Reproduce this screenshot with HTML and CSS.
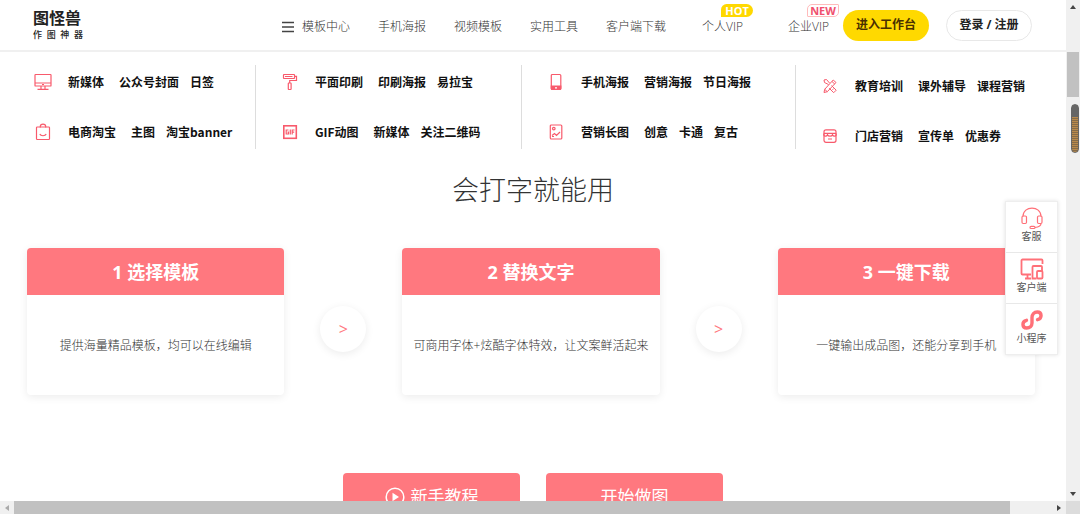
FILE: index.html
```html
<!DOCTYPE html>
<html lang="zh-CN">
<head>
<meta charset="utf-8">
<title>图怪兽作图神器</title>
<link rel="stylesheet" href="styles.css">
</head>
<body>
<div class="window">
  <div class="page">
    <header class="header">
      <a class="logo" href="#"><span class="logo-name">图怪兽</span><span class="logo-sub"><span>作</span><span>图</span><span>神</span><span>器</span></span></a>
      <nav class="nav">
        <a href="#" class="nav-menu"><svg width="12" height="12" viewBox="0 0 12 12" fill="none" stroke="#444" stroke-width="1.5"><path d="M0 1.5h12M0 6h12M0 10.5h12"/></svg>模板中心</a>
        <a href="#">手机海报</a>
        <a href="#">视频模板</a>
        <a href="#">实用工具</a>
        <a href="#">客户端下载</a>
        <a href="#" class="vip">个人VIP<span class="badge badge-hot">HOT</span></a>
        <a href="#" class="vip vip-company">企业VIP<span class="badge badge-new">NEW</span></a>
      </nav>
      <button class="pill pill-work">进入工作台</button>
      <button class="pill pill-login">登录 / 注册</button>
    </header>

    <section class="categories">
      <div class="category">
        <div class="row">
          <svg class="icon" viewBox="0 0 18 18"><rect x="1" y="1.5" width="16" height="11.5" rx=".6"/><path d="M1 10h16M7 13v3M11 13v3M3.5 16.3h11M8 11.5h2"/></svg>
          <a href="#">新媒体</a><a href="#">公众号封面</a><a href="#">日签</a>
        </div>
        <div class="row">
          <svg class="icon" viewBox="0 0 18 18"><rect x="2.5" y="4" width="13" height="12.5" rx=".8"/><path d="M6.3 4.500V3.500a2.700 2.300 0 0 1 5.400 0v1M5.800 11c1 2.300 5.400 2.300 6.400 0"/></svg>
          <a href="#">电商淘宝</a><a href="#">主图</a><a href="#">淘宝banner</a>
        </div>
      </div>
      <div class="category">
        <div class="row">
          <svg class="icon" viewBox="0 0 18 18"><rect x="2.500" y="1.500" width="11" height="4" rx=".5"/><path d="M13.500 3.300h2v4.200H8.700v2.500M4 3.500h7.500"/><rect x="7.300" y="10" width="2.800" height="6.500" rx=".5"/></svg>
          <a href="#">平面印刷</a><a href="#">印刷海报</a><a href="#">易拉宝</a>
        </div>
        <div class="row">
          <svg class="icon" viewBox="0 0 18 18"><rect x="2.800" y="2.800" width="12.500" height="12.500" stroke-width="1.600"/><path d="M7.500 7H5.200v4h2.300V9.200H6.500M9.300 6.500v5M11.200 11.500V7h2.300M11.200 9.200h2"/></svg>
          <a href="#">GIF动图</a><a href="#">新媒体</a><a href="#">关注二维码</a>
        </div>
      </div>
      <div class="category">
        <div class="row">
          <svg class="icon" viewBox="0 0 18 18"><rect x="4.300" y="1.500" width="9.500" height="15" rx="1"/><path d="M4.300 13h9.500v2.500a1 1 0 0 1-1 1h-7.500a1 1 0 0 1-1-1z" fill="#f85a6c"/><path d="M8 14.800h2" stroke="#fff"/></svg>
          <a href="#">手机海报</a><a href="#">营销海报</a><a href="#">节日海报</a>
        </div>
        <div class="row">
          <svg class="icon" viewBox="0 0 18 18"><rect x="3.300" y="2" width="11.500" height="14" rx="1"/><circle cx="6.800" cy="5.600" r="1.300"/><path d="M5 12.500l2.500-2 2 2 3.500-3.500M5 13.500h2"/></svg>
          <a href="#">营销长图</a><a href="#">创意</a><a href="#">卡通</a><a href="#">复古</a>
        </div>
      </div>
      <div class="category category-low">
        <div class="row">
          <svg class="icon icon-fine" viewBox="0 0 18 18"><path d="M7.500 7.500L3.500 5.500 3 3l2.500-.5 3 3.500M10.500 8.500l4.700 4.700-2.500 2.500-4.500-4.500M12.800 11.500l-1.300 1.300M3 15.500l.7-3.200 8.500-9.300 2.800 2.500-8.700 9.200zM11 4.500l2.700 2.500M3.700 12.300l2.600 2.400"/></svg>
          <a href="#">教育培训</a><a href="#">课外辅导</a><a href="#">课程营销</a>
        </div>
        <div class="row">
          <svg class="icon" viewBox="0 0 18 18"><rect x="3" y="2.800" width="12" height="12.500" rx="2"/><path d="M3 6.300h12M3 6.500c-1.200 3 2.600 3.500 3.500 1.200.7 2 4.300 2 5 0 .9 2.300 4.700 1.800 3.500-1.200M7 12h4"/></svg>
          <a href="#">门店营销</a><a href="#">宣传单</a><a href="#">优惠券</a>
        </div>
      </div>
    </section>

    <main>
      <h1 class="title">会打字就能用</h1>
      <section class="steps">
        <article class="card"><h2>1 选择模板</h2><p>提供海量精品模板，均可以在线编辑</p></article>
        <span class="arrow">&gt;</span>
        <article class="card"><h2>2 替换文字</h2><p>可商用字体+炫酷字体特效，让文案鲜活起来</p></article>
        <span class="arrow">&gt;</span>
        <article class="card"><h2>3 一键下载</h2><p>一键输出成品图，还能分享到手机</p></article>
      </section>
      <div class="actions">
        <button class="action"><svg width="20" height="20" viewBox="0 0 20 20"><circle cx="10" cy="10" r="8.800" fill="none" stroke="#fff" stroke-width="1.500"/><path d="M7.500 5.800v8.400l6.500-4.200z" fill="#fff"/></svg>新手教程</button>
        <button class="action">开始做图</button>
      </div>
    </main>

    <aside class="dock">
      <a href="#"><svg viewBox="0 0 24 24"><path d="M3 10.500C3 -.8 21 -.8 21 10.500M21 17.500c0 2.500-3 3.700-6 4"/><rect x="2" y="10" width="4.500" height="7.500" rx="1.200"/><rect x="17.500" y="10" width="4.500" height="7.500" rx="1.200"/><rect x="10" y="20.300" width="5" height="2.200" rx="1.100"/></svg>客服</a>
      <a href="#"><svg viewBox="0 0 24 24" class="bold"><path d="M11 17.500H2.500a1 1 0 0 1-1-1v-13a1 1 0 0 1 1-1h19a1 1 0 0 1 1 1V7M7.500 17.500v4M5 21.500h6"/><path d="M16.500 21.500H12.500V10a1 1 0 0 1 1-1H21a1 1 0 0 1 1 1v4"/><rect x="17" y="14" width="5.500" height="7.500" rx="1"/></svg>客户端</a>
      <a href="#"><svg viewBox="0 0 24 24" class="heavy"><path d="M6.500 12.300c-5 1.200-4.500 7.700.2 7.700 3 0 5.300-2 5.300-5V9.500c0-3 2-5.500 5.300-5.500 4.700 0 5.200 6.500.2 7.700"/></svg>小程序</a>
    </aside>
  </div>

  <div class="scroll-v">
    <svg class="tip" viewBox="0 0 8 8"><path d="M1 6l3-4 3 4z"/></svg>
    <div class="thumb-v"></div>
    <div class="gauge"></div>
    <svg class="tip tip-end" viewBox="0 0 8 8"><path d="M1 2l3 4 3-4z"/></svg>
  </div>
  <div class="scroll-h">
    <svg class="tip" viewBox="0 0 8 8"><path d="M6 1L2 4l4 3z" fill="#aaa"/></svg>
    <div class="thumb-h"></div>
    <svg class="tip" viewBox="0 0 8 8"><path d="M2 1l4 3-4 3z"/></svg>
  </div>
  <div class="corner"></div>
</div>
</body>
</html>
```
FILE: styles.css
```css
* { box-sizing: border-box; }
body {
  margin: 0;
  font: 12px/18px "Open Sans", "Noto Sans CJK SC", sans-serif;
  color: #555;
  background: #fff;
}
a { color: inherit; text-decoration: none; }
button { font: inherit; cursor: pointer; padding: 0; border: 0; }
h1, h2, p { margin: 0; }

.window {
  display: grid;
  grid-template: minmax(0, 1fr) 13px / minmax(0, 1fr) 14px;
  height: 100vh;
}
.page { position: relative; overflow: hidden; }

.header {
  display: flex;
  align-items: center;
  height: 52px;
  padding: 0 34px 0 33px;
  border-bottom: 2px solid #f0f0f0;
}
.logo { flex: none; width: 50px; color: #222; }
.logo-name { display: block; font-size: 16px; line-height: 20px; font-weight: 700; white-space: nowrap; }
.logo-sub { display: flex; justify-content: space-between; font-size: 9px; line-height: 14px; font-weight: 500; }
.nav { display: flex; gap: 28px; margin-left: auto; margin-right: 14px; padding-top: 3px; font-weight: 300; color: #333; white-space: nowrap; }
.nav-menu { display: flex; align-items: center; gap: 8px; }
.vip { position: relative; margin-left: 8px; }
.vip-company { margin-left: 17px; }
.badge {
  position: absolute;
  top: -14px;
  left: 19px;
  width: 32px;
  font-size: 11px;
  line-height: 13px;
  font-weight: 700;
  text-align: center;
}
.badge-hot { color: #fff; background: #ffd800; border-radius: 6px 7px 7px 0; }
.badge-new { color: #f0506e; line-height: 11px; border: 1px solid #fbb; border-radius: 5px 1px 5px 1px; }
.pill { width: 86px; height: 31px; border-radius: 16px; font-weight: 700; }
.pill-work { background: #ffd900; color: #4a3000; }
.pill-login { margin-left: 17px; background: #fff; color: #222; border: 1px solid #e8e8e8; }

.categories {
  display: grid;
  grid-template-columns: 255fr 266fr 274fr 271fr;
  padding-top: 13px;
  color: #111;
  font-family: "Noto Sans CJK SC", sans-serif;
  font-weight: 700;
}
.category { height: 84px; padding: 8px 0 0 25px; border-left: 1px solid #ddd; white-space: nowrap; }
.category:first-child { padding-left: 33px; border-left-color: transparent; }
.category-low { padding-top: 12px; }
.row { display: flex; align-items: center; gap: 11px; height: 18px; margin-bottom: 32px; }
.row a:first-of-type { margin: 0 4px 0 5px; }
.icon { width: 18px; height: 18px; fill: none; stroke: #f85a6c; stroke-width: 1.2; }
.icon-fine { stroke-width: 1; }

.title {
  margin-top: 22px;
  font-size: 27px;
  line-height: 38px;
  font-weight: 300;
  text-align: center;
  color: #333;
}
.steps { display: flex; align-items: center; padding: 39px 31px 0 27px; }
.card {
  flex: 1;
  border-radius: 4px;
  overflow: hidden;
  background: #fff;
  box-shadow: 0 2px 8px rgba(0, 0, 0, .08);
  text-align: center;
}
.card h2 { padding-top: 2px; font-size: 18px; line-height: 45px; font-weight: 700; color: #fff; background: #ff787f; }
.card p { padding-top: 2px; line-height: 98px; font-weight: 300; color: #333; white-space: nowrap; }
.arrow {
  width: 46px;
  margin: 14px 36px 0;
  border-radius: 50%;
  box-shadow: 0 2px 8px rgba(0, 0, 0, .08);
  font-size: 16px;
  line-height: 46px;
  text-align: center;
  color: #ff787f;
}
.actions { display: flex; justify-content: center; gap: 26px; margin-top: 78px; }
.action {
  display: flex;
  align-items: center;
  justify-content: center;
  gap: 6px;
  width: 177px;
  height: 47px;
  border-radius: 4px;
  background: #ff787f;
  color: #fff;
  font-size: 17px;
}

.dock {
  position: absolute;
  top: 201px;
  right: 8px;
  width: 53px;
  background: #fff;
  border: 1px solid #eee;
  box-shadow: 0 0 4px rgba(0, 0, 0, .12);
  font-size: 10px;
  line-height: 12px;
}
.dock a { display: flex; flex-direction: column; align-items: center; height: 50px; padding-top: 4px; }
.dock a + a { height: 51px; border-top: 1px solid #e8e8e8; }
.dock svg { width: 24px; height: 24px; fill: none; stroke: #ff7078; stroke-width: 1.2; }
.dock .bold { stroke-width: 1.8; }
.dock .heavy { stroke-width: 3.4; stroke-linecap: round; }

.scroll-v { display: flex; flex-direction: column; align-items: center; padding: 3px 0; background: #f0f0f0; }
.scroll-h { display: flex; align-items: center; padding: 0 3px; background: #f0f0f0; }
.tip { flex: none; width: 8px; height: 8px; fill: #444; }
.thumb-v { width: 12px; height: 45px; margin-top: 41px; background: #c1c1c1; }
.gauge {
  width: 8px;
  height: 49px;
  margin: 7px 0 0 4px;
  border: 1px solid #666;
  border-radius: 4px;
  background: linear-gradient(#666 12px, transparent 12px), repeating-linear-gradient(#b98a4c 0 1px, #866b48 1px 2px);
}
.tip-end { margin-top: auto; }
.thumb-h { flex: 0 0 94%; height: 100%; margin: 0 auto 0 3px; background: #c1c1c1; }
.corner { background: #dcdcdc; }
```
